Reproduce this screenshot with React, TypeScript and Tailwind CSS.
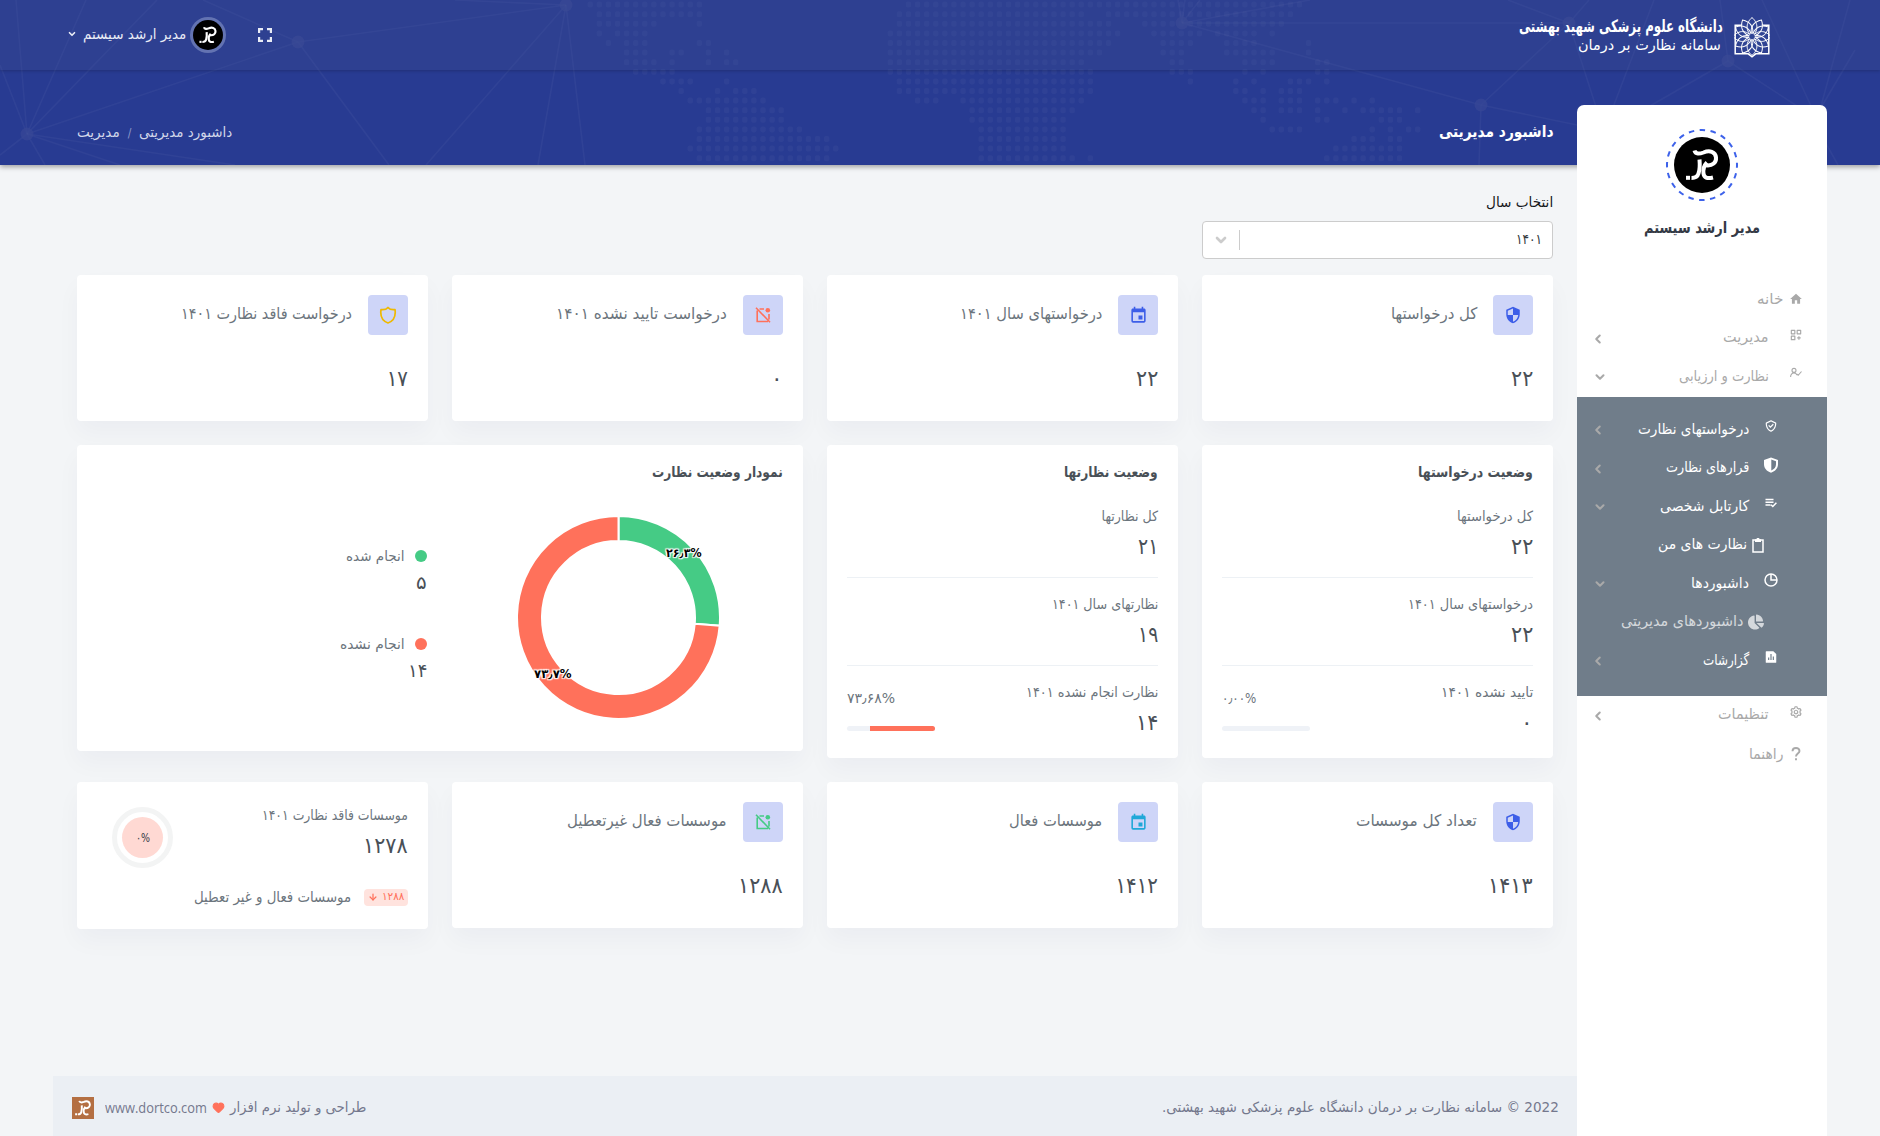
import { useLayoutEffect, useRef, useState, type ReactNode } from "react";
import { MdEvent, MdSecurity, MdHome } from "react-icons/md";
import { BiCustomize, BiCheckShield, BiCog } from "react-icons/bi";
import { FaChartPie } from "react-icons/fa";
import { RiFileChartFill } from "react-icons/ri";
import { Heart, ArrowDown, ChevronDown, ChevronLeft } from "lucide-react";

/** A single line of text, stretched horizontally to a given width. */
function Fit({ w, className = "", ltr = false, children }: { w: number; className?: string; ltr?: boolean; children: ReactNode }) {
  const ref = useRef<HTMLSpanElement>(null);
  const [scale, setScale] = useState(1);
  useLayoutEffect(() => {
    if (ref.current && ref.current.offsetWidth) setScale(w / ref.current.offsetWidth);
  }, [w]);
  return (
    <span dir={ltr ? "ltr" : "rtl"} className={`flex shrink-0 whitespace-nowrap ${className}`} style={{ width: w }}>
      <span ref={ref} className={`inline-block shrink-0 ${ltr ? "origin-left" : "origin-right"}`} style={{ transform: `scaleX(${scale})` }}>
        {children}
      </span>
    </span>
  );
}

const DOT_ROWS: (number | [number, number])[][] = [
  [[-5, 7], [30, 73]],
  [[-4, 7], [29, 49], [52, 72]],
  [[-4, 2], 7, [29, 52], [56, 71]],
  [-4, [-2, 1], [28, 53], [57, 62], [64, 68], 70],
  [-3, [-1, 1], 7, 8, [28, 52], [58, 61], [65, 68], 74],
  [[-1, 1], 4, 5, 8, 10, [28, 51], [58, 60], [65, 70], 74],
  [[-1, 2], 4, 8, 10, 11, [28, 49], 59, 60, [67, 70], 75, 76],
  [[0, 4], [28, 50], [59, 61], 67, 69, 75, 76],
  [[3, 6], 10, [29, 50], 61, 66, 68, [72, 74], 76],
  [5, 9, [11, 13], [29, 50], 66, 67, 69, [71, 73]],
  [[6, 14], [31, 33], [36, 49], [67, 69], [71, 73], [75, 77], 79, 81],
  [[8, 16], [37, 48], 68, 69, [71, 73], 75, 78, [80, 84], 86],
  [[8, 16], [37, 47], 69, 75, 76, [82, 84]],
  [[7, 18], [38, 47], [70, 73], 81, 83, 85, 86],
  [[7, 21], [38, 47], [79, 81], 83, 84],
  [[6, 22], [38, 47], [77, 84]],
  [[7, 21], [38, 48], 50, [76, 84]],
];

const LINKS = [
  [27, 134, 16, 0], [27, 134, 86, 0], [27, 134, 157, 0], [27, 134, 298, 42], [27, 134, 0, 155], [27, 134, 45, 165],
  [27, 134, 120, 165], [27, 134, 235, 165], [27, 134, 0, 65], [298, 42, 566, 5], [298, 42, 203, 0], [298, 42, 389, 165],
  [566, 5, 426, 165], [566, 5, 538, 165], [566, 5, 585, 165], [566, 5, 455, 0], [1182, 23, 1310, 0], [1182, 23, 1569, 23],
  [1182, 23, 1481, 105], [1182, 23, 1178, 0], [1182, 23, 1185, 0], [1182, 23, 1200, 0], [1569, 23, 1481, 105],
  [1569, 23, 1508, 0], [1569, 23, 1589, 0], [1481, 105, 1479, 165], [1481, 105, 1577, 125], [1569, 23, 1597, 110],
  [1654, 0, 1612, 110], [1728, 61, 1650, 106], [1728, 61, 1797, 106], [1728, 61, 1720, 0], [1762, 0, 1811, 106],
  [1850, 0, 1821, 106], [1822, 106, 1855, 50], [1824, 140, 1838, 165],
];
const NODES = [[27, 134], [298, 42], [566, 5], [1182, 23], [1569, 23], [1481, 105], [1728, 61]];

function HeaderPattern() {
  return (
    <svg className="absolute inset-0 h-full w-full" viewBox="0 0 1880 165" preserveAspectRatio="none">
      <g fill="#fff" fillOpacity=".035">
        {DOT_ROWS.flatMap((row, r) =>
          row.flatMap((e) => {
            const [a, b] = typeof e === "number" ? [e, e] : e;
            return Array.from({ length: b - a + 1 }, (_, i) => (
              <rect key={`${r}-${a + i}`} x={633 + (a + i) * 9.093} y={1.6 + r * 9.6} width={5.4} height={6} rx={1.8} />
            ));
          })
        )}
      </g>
      <g stroke="#fff" strokeOpacity=".04" strokeWidth="1.6">
        {LINKS.map(([a, b, c, d], i) => <line key={i} x1={a} y1={b} x2={c} y2={d} />)}
      </g>
      <g fill="#374796">
        {NODES.map(([x, y], i) => <circle key={i} cx={x} cy={y} r={6.5} fillOpacity=".75" />)}
      </g>
    </svg>
  );
}

function Monogram({ className = "" }: { className?: string }) {
  return (
    <svg viewBox="0 0 56 56" className={className} fill="none" stroke="#fff" strokeWidth="4" strokeLinecap="butt" strokeLinejoin="round">
      <path d="M20.500 13.500c1 4 5 3.500 9 2 6-2.500 12-1 12.500 5 .5 5.500-4 8-8 8-2.500 0-3.500-1-3.500-1" />
      <path d="M33 25.500c-3 3-4 7-3.500 11 .5 4 3.500 5.500 9.500 4" />
      <path d="M25.500 22.500c.5 6 .5 10-1 14-1 3.500-3 4.500-7 4.500" />
      <path d="M12 40.800h4" />
    </svg>
  );
}

function UniversityEmblem() {
  const petals = Array.from({ length: 12 }, (_, i) => i * 30);
  return (
    <svg viewBox="0 0 36 42" className="h-[42px] w-9" fill="none" stroke="#fff">
      <path d="M1.200 9.200h33.600v28.600h-13l-3.800 3-3.800-3h-13z" strokeWidth="1.500" />
      <circle cx="18" cy="20.500" r="15.500" fill="#2f4494" stroke="none" />
      <g strokeWidth="1">
        {petals.map((a) => (
          <path key={a} d="M18 20.500C10 13 13 6 18 1.500 23 6 26 13 18 20.500z" transform={`rotate(${a} 18 20.500)`} />
        ))}
      </g>
      <circle cx="18" cy="20.500" r="3.200" fill="#2f4494" strokeWidth=".6" />
    </svg>
  );
}

function TopBar() {
  return (
    <div className="relative flex h-[70px] items-center justify-between bg-[#46558f]/20 pr-[110px] pl-[67px] text-white shadow-[0_1px_3px_rgba(0,0,0,.2)]">
      <div className="flex items-center gap-[11px] pt-1">
        <UniversityEmblem />
        <div className="flex flex-col pb-0.5">
          <Fit w={204} className="h-[18px] items-center text-[17px] font-bold">دانشگاه علوم پزشکی شهید بهشتی</Fit>
          <Fit w={143} className="mr-0.5 h-[18px] items-center text-[15px]">سامانه نظارت بر درمان</Fit>
        </div>
      </div>
      <div className="flex items-center">
        <svg viewBox="0 0 14 14" className="ml-[32px] size-3.5" fill="none" stroke="#e9ecf6" strokeWidth="2.200">
          <path d="M1.100 5V1.100H5M9 1.100h3.900V5M12.900 9v3.900H9M5 12.900H1.100V9" />
        </svg>
        <div className="flex size-9 items-center justify-center rounded-full bg-[#6373b2]">
          <div className="size-[30px] rounded-full bg-black"><Monogram className="size-[30px]" /></div>
        </div>
        <Fit w={103} className="mr-1 h-6 items-center pb-0.5 text-[14px] text-[#e9ecf6]">مدیر ارشد سیستم</Fit>
        <ChevronDown className="mr-[6px] mb-0.5 size-2.5 text-[#e9ecf6]" strokeWidth={4} />
      </div>
    </div>
  );
}

function Header() {
  return (
    <header className="relative h-[165px] shrink-0 bg-[#283b92] shadow-[0_2px_5px_rgba(0,0,0,.35)]">
      <HeaderPattern />
      <TopBar />
      <div className="relative flex h-[95px] items-center justify-between pt-7 pr-[327px] pl-[77px]">
        <Fit w={114} className="h-6 items-center text-[16px] font-bold text-white">داشبورد مدیریتی</Fit>
        <div className="flex items-center pt-0.5 text-[14px] text-[#d2d7ea]">
          <Fit w={93}>داشبورد مدیریتی</Fit>
          <span className="w-[19px] text-center text-[12px] text-[#8d98c8]">/</span>
          <Fit w={43}>مدیریت</Fit>
        </div>
      </div>
    </header>
  );
}

function HalfShield() {
  return (
    <svg viewBox="0 0 16 16" className="size-4" fill="currentColor">
      <path fillRule="evenodd" d="M8 .5 1 3v4.200c0 3.700 2.600 7 7 8.500 4.400-1.500 7-4.800 7-8.500V3zM8.300 2.600 13 4.300v3c0 2.700-1.600 4.900-4.700 6.200z" />
    </svg>
  );
}

function Clipboard() {
  return (
    <svg viewBox="0 0 12 16" className="h-4 w-3" fill="none" stroke="currentColor" strokeWidth="1.500">
      <path d="M1 3h10v12H1z" />
      <path d="M3 3.600h6M6 1v2" strokeWidth="2.600" />
    </svg>
  );
}

function UserCheckIcon() {
  return (
    <svg viewBox="0 0 12 12" className="h-3 w-3 shrink-0" fill="none" stroke="currentColor" strokeWidth="1.100">
      <circle cx="4" cy="3.400" r="2" />
      <path d="M.6 10c0-2.600 1.300-4 3.400-4s2.600 1 3 2.200M6.600 6.800l1.600 1.500 3.300-3.800" />
    </svg>
  );
}

function ListCheckIcon() {
  return (
    <svg viewBox="0 0 12 10" className="h-2.5 w-3" fill="none" stroke="currentColor" strokeWidth="1.500">
      <path d="M.5 1.500h8M.5 4.200h8M.5 7h5M6 6.800l1.800 1.700 3.600-3.700" />
    </svg>
  );
}

function PieOutline() {
  return (
    <svg viewBox="0 0 14 14" className="size-3.5" fill="none" stroke="currentColor" strokeWidth="1.500">
      <circle cx="7" cy="7" r="6" />
      <path d="M7 1v6h6" />
    </svg>
  );
}

function QuestionIcon() {
  return (
    <svg viewBox="0 0 10 14" className="h-[14px] w-2.5 shrink-0" fill="none" stroke="currentColor" strokeWidth="1.900">
      <path d="M1.500 4.300C1.500 2.300 3 1 5 1s3.500 1.200 3.500 3C8.500 6.500 5 6.700 5 9.500M5 11.300v2" />
    </svg>
  );
}

type MenuItem = { label: string; w: number; icon: ReactNode; state?: "open" | "closed" };

function MenuRow({ item, level }: { item: MenuItem; level: "top" | "sub" | "leaf" | "plain" }) {
  const sub = level === "sub" || level === "leaf";
  const pad = level === "sub" ? "pr-[48px]" : level === "leaf" ? "pr-[63px]" : "pr-[25px]";
  const gap = level === "top" ? "ml-[21px]" : level === "plain" ? "ml-[7px]" : level === "sub" ? "ml-[14px]" : "ml-[5px]";
  const box = level === "leaf" ? "" : level === "sub" ? "w-4" : "w-3";
  const lift = item.state ? "pb-1.5" : "";
  return (
    <div className={`flex h-[38.5px] items-center pl-[16px] ${pad} ${sub ? "text-white" : "text-[#a9a9a9]"}`}>
      <span className={`flex shrink-0 justify-center ${box} ${gap} ${lift}`}>{item.icon}</span>
      <Fit w={item.w} className="h-6 items-center pb-px text-[15px]">{item.label}</Fit>
      {item.state && (
        <span className="mr-auto pt-0.5 text-[#a9a9a9]">
          {item.state === "open" ? <ChevronDown className="size-3.5" strokeWidth={3.5} /> : <ChevronLeft className="-ml-0.5 size-3.5" strokeWidth={3.5} />}
        </span>
      )}
    </div>
  );
}

function Sidebar() {
  return (
    <aside className="flex h-[1031px] w-[250px] shrink-0 flex-col rounded-t-[7px] bg-white">
      <div className="flex h-[175px] flex-col items-center pt-6">
        <div className="relative flex size-[72px] items-center justify-center">
          <svg viewBox="0 0 72 72" className="absolute inset-0" fill="none">
            <circle cx="36" cy="36" r="35" stroke="#3d62ea" strokeWidth="2" strokeDasharray="5.500 5.500" strokeDashoffset="2.700" />
          </svg>
          <div className="size-14 rounded-full bg-black"><Monogram className="size-14" /></div>
        </div>
        <Fit w={116} className="mt-[15px] h-6 items-center pb-px text-[16px] font-bold text-[#343a46]">مدیر ارشد سیستم</Fit>
      </div>
      <MenuRow level="plain" item={{ label: "خانه", w: 26, icon: <MdHome className="size-3.5 shrink-0" /> }} />
      <MenuRow level="top" item={{ label: "مدیریت", w: 46, icon: <BiCustomize className="size-3.5 shrink-0" />, state: "closed" }} />
      <MenuRow level="top" item={{ label: "نظارت و ارزیابی", w: 90, icon: <UserCheckIcon />, state: "open" }} />
      <div className="mt-[1.5px] h-[298.5px] bg-[#707d8a] pt-[13px]">
        <MenuRow level="sub" item={{ label: "درخواستهای نظارت", w: 111, icon: <BiCheckShield className="size-3.5" />, state: "closed" }} />
        <MenuRow level="sub" item={{ label: "قرارهای نظارت", w: 83, icon: <HalfShield />, state: "closed" }} />
        <MenuRow level="sub" item={{ label: "کارتابل شخصی", w: 89, icon: <ListCheckIcon />, state: "open" }} />
        <MenuRow level="leaf" item={{ label: "نظارت های من", w: 89, icon: <Clipboard /> }} />
        <MenuRow level="sub" item={{ label: "داشبوردها", w: 58, icon: <PieOutline />, state: "open" }} />
        <div className="opacity-70"><MenuRow level="leaf" item={{ label: "داشبوردهای مدیریتی", w: 122, icon: <FaChartPie className="size-4" /> }} /></div>
        <MenuRow level="sub" item={{ label: "گزارشات", w: 46, icon: <RiFileChartFill className="size-3.5" />, state: "closed" }} />
      </div>
      <MenuRow level="top" item={{ label: "تنظیمات", w: 51, icon: <BiCog className="size-3.5 shrink-0" />, state: "closed" }} />
      <div className="h-px" />
      <MenuRow level="plain" item={{ label: "راهنما", w: 34, icon: <QuestionIcon /> }} />
    </aside>
  );
}

function Card({ className = "", children }: { className?: string; children: ReactNode }) {
  return <section className={`rounded bg-white shadow-[0_12px_24px_rgba(18,38,83,.035)] ${className}`}>{children}</section>;
}

function StatCard({ icon, title, tw, value, vw }: { icon: ReactNode; title: string; tw: number; value: string; vw: number }) {
  return (
    <Card className="h-[146px] p-5">
      <div className="flex items-center gap-4">
        <div className="flex size-10 shrink-0 items-center justify-center rounded bg-[#ced5f8]">{icon}</div>
        <Fit w={tw} className="h-7 items-center pb-0.5 text-[16px] text-[#6c757d]">{title}</Fit>
      </div>
      <Fit w={vw} className="mt-[27px] h-8 items-center text-[22px] text-[#495057]">{value}</Fit>
    </Card>
  );
}

function SquareOff({ className }: { className: string }) {
  return (
    <svg viewBox="0 0 16 16" className={`size-4 ${className}`} fill="none" stroke="currentColor" strokeWidth="1.600">
      <path d="M1 .8 15 15.200M4.500 2H9M2.200 3.500v11H13M14 7v5.500" />
      <circle cx="12.800" cy="3.200" r="2.300" fill="currentColor" stroke="none" />
    </svg>
  );
}

function ShieldOutline() {
  return (
    <svg viewBox="0 0 18 18" className="size-[18px] text-[#eeb902]" fill="none" stroke="currentColor" strokeWidth="1.700" strokeLinejoin="round">
      <path d="M9 1.500C7.500 3.300 5 4 2 3.600 1.300 8.500 1.800 14.500 9 17c7.200-2.500 7.700-8.500 7-13.400-3 .4-5.500-.3-7-2.100z" />
    </svg>
  );
}

type Line = { label: string; lw: number; value: string; vw: number };

function StatusCard({ title, tw, lines, percent, pw, fill }: { title: string; tw: number; lines: Line[]; percent: string; pw: number; fill: number }) {
  return (
    <Card className="h-[313px] px-5 pt-[15px]">
      <Fit w={tw} className="h-6 items-center text-[15px] font-bold text-[#495057]">{title}</Fit>
      <div className="mt-[6px] divide-y divide-[#edf1f5]">
        {lines.map((l, i) => (
          <div key={l.label} className="flex h-[88px] justify-between pt-[14px]">
            <div>
              <Fit w={l.lw} className="h-6 items-center text-[14px] text-[#6c757d]">{l.label}</Fit>
              <Fit w={l.vw} className="mt-0.5 h-8 items-center text-[22px] text-[#495057]">{l.value}</Fit>
            </div>
            {i === 2 && (
              <div className="flex w-[88px] flex-col items-end pt-1.5">
                <Fit w={pw} ltr className="h-6 items-center text-[14px] text-[#6c757d]">{percent}</Fit>
                <div className="mt-4 h-[5px] w-full overflow-hidden rounded-full bg-[#eff2f7]">
                  <div className="h-full bg-[#ff715b]" style={{ width: `${fill}%` }} />
                </div>
              </div>
            )}
          </div>
        ))}
      </div>
    </Card>
  );
}

function Donut() {
  const R = 101.5, r = 76.5, c = 102.5;
  const a = 0.263 * 2 * Math.PI;
  const p = (rad: number) => `${c + rad * Math.sin(a)} ${c - rad * Math.cos(a)}`;
  return (
    <div className="relative size-[205px]" dir="ltr">
      <svg viewBox="0 0 205 205" className="size-full" stroke="#fff" strokeWidth="2">
        <path fill="#45cb85" d={`M${c} ${c - R}A${R} ${R} 0 0 1 ${p(R)}L${p(r)}A${r} ${r} 0 0 0 ${c} ${c - r}z`} />
        <path fill="#ff715b" d={`M${p(R)}A${R} ${R} 0 1 1 ${c} ${c - R}L${c} ${c - r}A${r} ${r} 0 1 0 ${p(r)}z`} />
      </svg>
      <div className="absolute top-[28px] left-[150px] flex h-5 items-center text-[12px] font-bold text-black [text-shadow:0_0_2px_#fff,0_0_2px_#fff,1px_1px_1px_#fff,-1px_-1px_1px_#fff,1px_-1px_1px_#fff,-1px_1px_1px_#fff]">
        <Fit w={36} ltr>۲۶٫۳%</Fit>
      </div>
      <div className="absolute top-[149px] left-[18px] flex h-5 items-center text-[12px] font-bold text-black [text-shadow:0_0_2px_#fff,0_0_2px_#fff,1px_1px_1px_#fff,-1px_-1px_1px_#fff,1px_-1px_1px_#fff,-1px_1px_1px_#fff]">
        <Fit w={38} ltr>۷۳٫۷%</Fit>
      </div>
    </div>
  );
}

function Legend({ dot, label, lw, value, vw }: { dot: string; label: string; lw: number; value: string; vw: number }) {
  return (
    <div className="h-[88px]">
      <div className="flex h-6 items-center gap-2.5">
        <span className={`size-3 shrink-0 rounded-full ${dot}`} />
        <Fit w={lw} className="text-[14px] text-[#6c757d]">{label}</Fit>
      </div>
      <Fit w={vw} className="mt-0.5 h-6 items-center text-[18px] text-[#495057]">{value}</Fit>
    </div>
  );
}

function ChartCard() {
  return (
    <Card className="col-span-2 h-[306px] px-5 pt-[15px]">
      <Fit w={131} className="h-6 items-center text-[15px] font-bold text-[#495057]">نمودار وضعیت نظارت</Fit>
      <div className="flex">
        <div className="mt-[31px] mr-[62px]"><Donut /></div>
        <div className="mt-[60px] mr-[89px]">
          <Legend dot="bg-[#45cb85]" label="انجام شده" lw={59} value="۵" vw={11} />
          <Legend dot="bg-[#ff715b]" label="انجام نشده" lw={65} value="۱۴" vw={19} />
        </div>
      </div>
    </Card>
  );
}

function MissingCard() {
  return (
    <Card className="h-[147px] px-5 pt-[21px]">
      <div className="flex justify-between">
        <div>
          <Fit w={146} className="h-6 items-center text-[14px] text-[#6c757d]">موسسات فاقد نظارت ۱۴۰۱</Fit>
          <Fit w={45} className="mt-0.5 h-8 items-center text-[22px] text-[#495057]">۱۲۷۸</Fit>
        </div>
        <div className="mt-1 ml-[15px] flex size-[61px] items-center justify-center rounded-full border-[5px] border-[#f3f4f4]">
          <div className="flex size-[41px] items-center justify-center rounded-full bg-[#ffd9d3] text-[12px] text-[#343a46]"><Fit w={14} ltr>۰%</Fit></div>
        </div>
      </div>
      <div className="mt-[17px] flex h-6 items-center gap-[13px]">
        <span className="flex h-[17px] w-11 items-center justify-center gap-1 rounded bg-[#ffe3de] text-[11px] text-[#ff715b]">
          <Fit w={22}>۱۲۸۸</Fit>
          <ArrowDown className="size-2.5" strokeWidth={3} />
        </span>
        <Fit w={157} className="text-[15px] text-[#6c757d]">موسسات فعال و غیر تعطیل</Fit>
      </div>
    </Card>
  );
}

function YearSelect() {
  return (
    <div className="w-[351px]">
      <Fit w={67} className="h-6 items-center text-[14px] text-[#16181b]">انتخاب سال</Fit>
      <div className="mt-[7px] flex h-[38px] items-center rounded border border-[#ccc] bg-white pr-[10px]">
        <Fit w={26} className="pb-px text-[14px] text-[#343a40]">۱۴۰۱</Fit>
        <span className="mr-auto h-5 w-px bg-[#ccc]" />
        <span className="flex w-[36px] justify-center"><ChevronDown className="size-4 text-[#ccc]" strokeWidth={4} /></span>
      </div>
    </div>
  );
}

function Footer() {
  return (
    <footer className="flex h-[60px] items-center justify-between bg-[#ebeff4] pr-[18px] pl-[19px] text-[14px] text-[#74788d]">
      <Fit w={397} className="pt-0.5">2022 © سامانه نظارت بر درمان دانشگاه علوم پزشکی شهید بهشتی.</Fit>
      <div className="flex items-center pt-0.5">
        <Fit w={136}>طراحی و تولید نرم افزار</Fit>
        <Heart className="mr-[5px] size-[13px] fill-[#ff715b] text-[#ff715b]" />
        <Fit w={102} ltr className="mr-[5px] font-['Open_Sans']">www.dortco.com</Fit>
        <span className="mr-[11px] mt-0.5 size-[22px] bg-[#b46f42]"><Monogram className="size-[22px] scale-125" /></span>
      </div>
    </footer>
  );
}

export default function App() {
  return (
    <div dir="rtl" className="flex h-[1136px] w-[1880px] flex-col overflow-hidden bg-[#f3f5f7] font-['DejaVu_Sans_Condensed','DejaVu_Sans',sans-serif]">
      <Header />
      <div className="relative -mt-[60px] flex h-[1031px] pr-[53px]">
        <Sidebar />
        <div className="flex w-[1524px] flex-col">
          <main className="mt-[85px] flex-1 pr-6 pl-6">
            <YearSelect />
            <div className="mt-4 grid grid-cols-[repeat(4,351px)] items-start gap-6">
              <StatCard icon={<MdSecurity className="size-[18px] text-[#3d5ee8]" />} title="کل درخواستها" tw={86} value="۲۲" vw={22} />
              <StatCard icon={<MdEvent className="size-[19px] text-[#3d5ee8]" />} title="درخواستهای سال ۱۴۰۱" tw={142} value="۲۲" vw={22} />
              <StatCard icon={<SquareOff className="text-[#ff715b]" />} title="درخواست تایید نشده ۱۴۰۱" tw={171} value="۰" vw={12} />
              <StatCard icon={<ShieldOutline />} title="درخواست فاقد نظارت ۱۴۰۱" tw={171} value="۱۷" vw={21} />
              <StatusCard
                title="وضعیت درخواستها" tw={115} percent="۰٫۰۰%" pw={34} fill={0}
                lines={[
                  { label: "کل درخواستها", lw: 76, value: "۲۲", vw: 22 },
                  { label: "درخواستهای سال ۱۴۰۱", lw: 125, value: "۲۲", vw: 22 },
                  { label: "تایید نشده ۱۴۰۱", lw: 92, value: "۰", vw: 12 },
                ]}
              />
              <StatusCard
                title="وضعیت نظارتها" tw={94} percent="۷۳٫۶۸%" pw={48} fill={73.68}
                lines={[
                  { label: "کل نظارتها", lw: 56, value: "۲۱", vw: 20 },
                  { label: "نظارتهای سال ۱۴۰۱", lw: 106, value: "۱۹", vw: 20 },
                  { label: "نظارت انجام نشده ۱۴۰۱", lw: 132, value: "۱۴", vw: 22 },
                ]}
              />
              <ChartCard />
              <StatCard icon={<MdSecurity className="size-[18px] text-[#3d5ee8]" />} title="تعداد کل موسسات" tw={121} value="۱۴۱۳" vw={45} />
              <StatCard icon={<MdEvent className="size-[19px] text-[#20a8d8]" />} title="موسسات فعال" tw={93} value="۱۴۱۲" vw={43} />
              <StatCard icon={<SquareOff className="text-[#45cb85]" />} title="موسسات فعال غیرتعطیل" tw={160} value="۱۲۸۸" vw={45} />
              <MissingCard />
            </div>
          </main>
          <Footer />
        </div>
      </div>
    </div>
  );
}
